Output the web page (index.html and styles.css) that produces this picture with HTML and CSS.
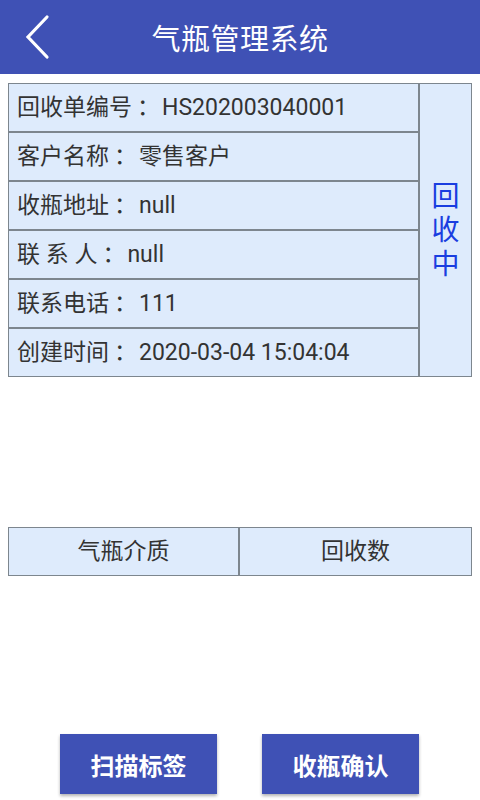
FILE: index.html
```html
<!DOCTYPE html>
<html lang="zh">
<head>
  <meta charset="UTF-8" />
  <meta name="viewport" content="width=device-width, initial-scale=1" />
  <title>气瓶管理系统</title>
  <link rel="stylesheet" href="styles.css">
</head>
<body>
  <header class="topbar">
    <svg class="back" width="30" height="46" viewBox="0 0 30 46">
      <polyline points="23,3 4,23 23,43" fill="none" stroke="#fff" stroke-width="3.2" stroke-linecap="round" stroke-linejoin="miter" />
    </svg>
    <h1>气瓶管理系统</h1>
  </header>

  <div class="info">
    <div class="rows">
      <div class="row">回收单编号<span class="colon">：</span>HS202003040001</div>
      <div class="row">客户名称<span class="colon">：</span>零售客户</div>
      <div class="row">收瓶地址<span class="colon">：</span>null</div>
      <div class="row">联 系 人<span class="colon">：</span>null</div>
      <div class="row">联系电话<span class="colon">：</span>111</div>
      <div class="row">创建时间<span class="colon">：</span>2020-03-04 15:04:04</div>
    </div>
    <div class="status">回<br>收<br>中</div>
  </div>

  <div class="grid-head">
    <div class="cell">气瓶介质</div>
    <div class="cell">回收数</div>
  </div>

  <div class="actions">
    <button class="btn">扫描标签</button>
    <button class="btn">收瓶确认</button>
  </div>
</body>
</html>
```

FILE: styles.css
```css
body {
  margin: 0;
  padding: 0;
  width: 480px;
  height: 800px;
  position: relative;
  background: #fff;
  font-family: Roboto, "Noto Sans CJK SC", sans-serif;
  color: #333;
}

.topbar {
  height: 74px;
  background-color: #3f51b5;
  display: flex;
  align-items: center;
  justify-content: center;
  position: relative;
}

.topbar h1 {
  margin: 0;
  color: #fff;
  font-size: 29px;
  font-weight: normal;
  letter-spacing: 0.5px;
}

.back {
  position: absolute;
  left: 24px;
  top: 14px;
}

.info {
  margin: 9px 8px 0 8px;
  border: 1px solid #7d868e;
  background: #deebfc;
  display: flex;
}

.rows {
  flex: 1;
  border-right: 2px solid #7d868e;
}

.row {
  height: 47px;
  line-height: 47px;
  padding-left: 8px;
  font-size: 23px;
  border-bottom: 2px solid #7d868e;
}

.row:last-child {
  border-bottom: none;
}

.colon {
  margin: 0 2px 0 5px;
}

.status {
  width: 51px;
  display: flex;
  align-items: center;
  justify-content: center;
  text-align: center;
  color: #1a3ee0;
  font-size: 28px;
  line-height: 34px;
  padding-top: 2px;
}

.grid-head {
  margin: 150px 8px 0 8px;
  border: 1px solid #7d868e;
  background: #deebfc;
  display: grid;
  grid-template-columns: 231px 1fr;
}

.cell {
  height: 47px;
  line-height: 47px;
  text-align: center;
  font-size: 23px;
}

.cell:first-child {
  border-right: 2px solid #7d868e;
}

.actions {
  position: absolute;
  left: 60px;
  top: 734px;
  display: flex;
  gap: 45px;
}

.btn {
  width: 157px;
  height: 60px;
  border: none;
  background: #3f51b5;
  color: #fff;
  font-family: Roboto, "Noto Sans CJK SC", sans-serif;
  font-size: 24px;
  font-weight: bold;
  box-shadow: 0 2px 3px rgba(0, 0, 0, 0.3);
  padding: 0;
}
```
